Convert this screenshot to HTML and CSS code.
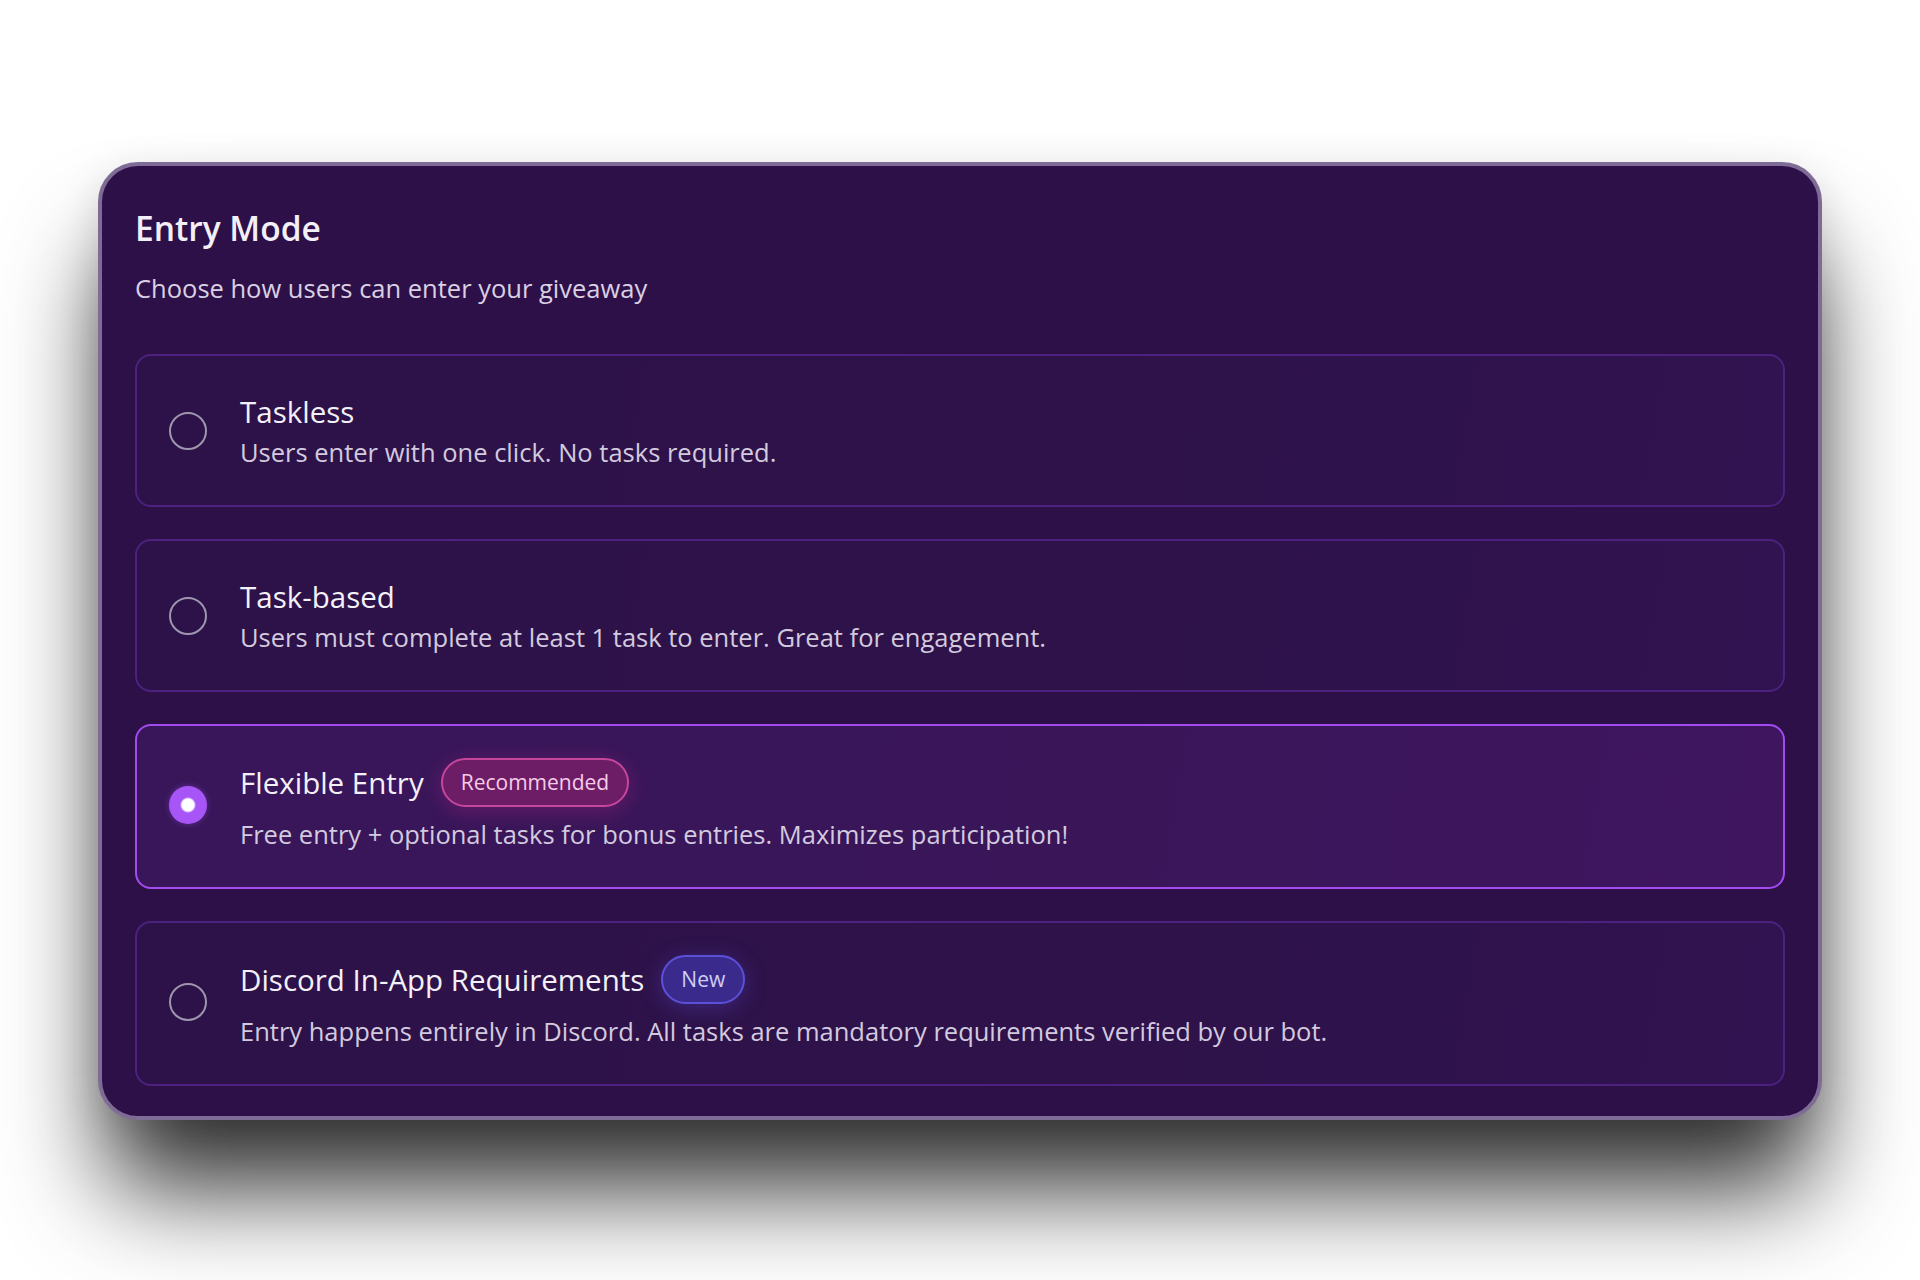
FILE: index.html
```html
<html>
    <head>
        <title>Entry Mode</title>
        <link rel="stylesheet" href="styles.css">
    </head>
    <body>
        <div class="panel">
            <div class="heading">Entry Mode</div>
            <div class="subheading">Choose how users can enter your giveaway</div>
            <div class="options">
                <div class="option">
                    <span class="radio"></span>
                    <div class="text">
                        <div class="name">Taskless</div>
                        <div class="desc">Users enter with one click. No tasks required.</div>
                    </div>
                </div>
                <div class="option">
                    <span class="radio"></span>
                    <div class="text">
                        <div class="name">Task-based</div>
                        <div class="desc">Users must complete at least 1 task to enter. Great for engagement.</div>
                    </div>
                </div>
                <div class="option selected">
                    <span class="radio"></span>
                    <div class="text">
                        <div class="name">Flexible Entry <span class="badge pink">Recommended</span></div>
                        <div class="desc">Free entry + optional tasks for bonus entries. Maximizes participation!</div>
                    </div>
                </div>
                <div class="option">
                    <span class="radio"></span>
                    <div class="text">
                        <div class="name">Discord In-App Requirements <span class="badge blue">New</span></div>
                        <div class="desc">Entry happens entirely in Discord. All tasks are mandatory requirements verified by our bot.</div>
                    </div>
                </div>
            </div>
        </div>
    </body>
</html>
```

FILE: styles.css
```css
body {
    margin: 0;
    background: #fff;
    font-family: "Open Sans", "Noto Sans", sans-serif;
}
.panel {
    margin: 162px 98px 0;
    background: #2e1049;
    border: 4px solid #7f6c96;
    border-radius: 40px;
    padding: 42px 33px 30px;
    box-shadow: 0 80px 100px -10px rgba(0, 0, 0, 0.8), 0 10px 40px rgba(0, 0, 0, 0.12);
}
.heading {
    color: #f3eff7;
    font-size: 33.5px;
    font-weight: 600;
    line-height: 40px;
}
.subheading {
    color: #d9d1e3;
    font-size: 25.5px;
    line-height: 32px;
    margin-top: 24px;
}
.options {
    display: flex;
    flex-direction: column;
    gap: 32px;
    margin-top: 50px;
}
.option {
    display: flex;
    align-items: center;
    gap: 33px;
    padding: 37px 32px 36px;
    border: 2px solid #4c2180;
    border-radius: 16px;
    background: linear-gradient(100deg, #2d1249 0%, #2e1249 60%, #301350 100%);
}
.option.selected {
    border-color: #a24cf0;
    background: linear-gradient(100deg, #381659 0%, #3a1659 60%, #3f1560 100%);
}
.radio {
    flex: none;
    width: 34px;
    height: 34px;
    border: 2px solid #9e96ad;
    border-radius: 50%;
    box-sizing: content-box;
}
.selected .radio {
    width: 38px;
    height: 38px;
    border: none;
    background: radial-gradient(circle, #fff 0, #fff 6px, #a855f7 8px);
    box-shadow: 0 0 6px rgba(168, 85, 247, 0.4);
}
.name {
    display: flex;
    align-items: center;
    gap: 17px;
    color: #f4f0f8;
    font-size: 29.5px;
    font-weight: 500;
    line-height: 38px;
}
.desc {
    color: #d3cadf;
    font-size: 25.5px;
    line-height: 34px;
    margin-top: 4px;
}
.selected .desc, .option:last-child .desc {
    margin-top: 10px;
}
.selected, .option:last-child {
    padding-top: 32px;
}
.badge {
    display: inline-block;
    font-size: 21px;
    font-weight: 500;
    line-height: 45px;
    padding: 0 18px;
    border-radius: 999px;
    border: 2px solid;
}
.badge.pink {
    color: #f6cbe9;
    background: #6d1d66;
    border-color: #c4479b;
    box-shadow: 0 4px 22px rgba(219, 39, 150, 0.3);
}
.badge.blue {
    color: #cfcdf7;
    background: #3a2a8c;
    border-color: #5b51d9;
    box-shadow: 0 4px 22px rgba(99, 90, 240, 0.3);
}
```
